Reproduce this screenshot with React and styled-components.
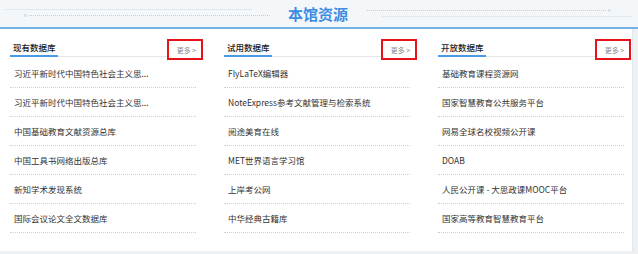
import React from "react";
import styled, { createGlobalStyle } from "styled-components";

const Global = createGlobalStyle`
  html, body { margin: 0; padding: 0; }
  body {
    background: #eef1f4;
    font-family: "Noto Sans CJK SC", "Noto Sans", sans-serif;
  }
`;

const Panel = styled.div`
  width: 632px;
  height: 251px;
  background: #fff;
  border-right: 1px solid #e2e6ea;
  display: flex;
  flex-direction: column;
`;

const Banner = styled.div`
  height: 27px;
  background: #f4f7fa;
  border-bottom: 2px solid #74b2ea;
  display: flex;
  align-items: flex-start;
  width: 638px;
  box-sizing: content-box;
`;

const Deco = styled.div`
  display: flex;
  flex-direction: column;
  gap: 4px;
  padding-top: 9px;
  width: ${(p) => p.$w || "auto"};
  flex: ${(p) => (p.$grow ? 1 : "none")};
`;

const SolidLine = styled.div`
  height: 0;
  border-top: 1px solid #e1e7ee;
  margin-left: ${(p) => p.$ml || 0}px;
  margin-right: ${(p) => p.$mr || 0}px;
`;

const DotLine = styled.div`
  display: flex;
  align-items: center;
  flex-direction: ${(p) => (p.$reverse ? "row-reverse" : "row")};
  margin-left: ${(p) => p.$ml || 0}px;
  margin-right: ${(p) => p.$mr || 0}px;
  gap: 2px;
  &::before {
    content: "";
    width: 3px;
    height: 3px;
    background: #dde4ec;
    flex: none;
  }
  &::after {
    content: "";
    flex: 1;
    border-top: 1px dotted #c3ced9;
  }
`;

const Title = styled.h1`
  margin: 0 19px 0 18px;
  font-size: 15px;
  line-height: 27px;
  font-weight: 700;
  color: #3b8de1;
  letter-spacing: 0;
  white-space: nowrap;
`;

const Columns = styled.div`
  display: grid;
  grid-template-columns: repeat(3, 186px);
  column-gap: 28px;
  padding: 10px 0 0 10px;
`;

const Column = styled.section`
  display: flex;
  flex-direction: column;
`;

const HeadRow = styled.div`
  display: flex;
  align-items: flex-start;
`;

const HeadTitle = styled.div`
  flex: 1;
  height: 17px;
  border-bottom: 1px solid #e3e6ea;
  display: flex;
`;

const HeadText = styled.span`
  padding: 0 2px 0 3px;
  font-size: 8.5px;
  line-height: 16px;
  font-weight: 500;
  color: #222;
  border-bottom: 2px solid #4a9be6;
  margin-bottom: -1px;
`;

const More = styled.a`
  width: 36px;
  height: 21px;
  box-sizing: border-box;
  border: 2px solid #e8121b;
  margin-right: -7px;
  margin-bottom: -2px;
  display: flex;
  align-items: center;
  justify-content: center;
  font-size: 7px;
  color: #8a8a8a;
  text-decoration: none;
  padding-left: 3px;
`;

const List = styled.ul`
  list-style: none;
  margin: 1px 0 0;
  padding: 0;
`;

const Item = styled.li`
  height: 29px;
  box-sizing: border-box;
  border-bottom: 1px dotted #cfcfcf;
  padding-left: 4px;
  display: flex;
  align-items: center;
  font-size: 8.5px;
  color: #333;
  white-space: nowrap;
  overflow: hidden;
`;

const data = [
  {
    title: "现有数据库",
    items: [
      "习近平新时代中国特色社会主义思...",
      "习近平新时代中国特色社会主义思...",
      "中国基础教育文献资源总库",
      "中国工具书网络出版总库",
      "新知学术发现系统",
      "国际会议论文全文数据库",
    ],
  },
  {
    title: "试用数据库",
    items: [
      "FlyLaTeX编辑器",
      "NoteExpress参考文献管理与检索系统",
      "阅途美育在线",
      "MET世界语言学习馆",
      "上岸考公网",
      "中华经典古籍库",
    ],
  },
  {
    title: "开放数据库",
    items: [
      "基础教育课程资源网",
      "国家智慧教育公共服务平台",
      "网易全球名校视频公开课",
      "DOAB",
      "人民公开课 - 大思政课MOOC平台",
      "国家高等教育智慧教育平台",
    ],
  },
];

export default function App() {
  return (
    <>
      <Global />
      <Panel>
        <Banner>
          <Deco $w="270px">
            <SolidLine $ml={5} $mr={18} />
            <DotLine $ml={24} />
          </Deco>
          <Title>本馆资源</Title>
          <Deco $grow>
            <DotLine $reverse $mr={27} />
            <SolidLine $ml={15} $mr={6} />
          </Deco>
        </Banner>
        <Columns>
          {data.map((col) => (
            <Column key={col.title}>
              <HeadRow>
                <HeadTitle>
                  <HeadText>{col.title}</HeadText>
                </HeadTitle>
                <More href="#">更多 &gt;</More>
              </HeadRow>
              <List>
                {col.items.map((it, i) => (
                  <Item key={i}>{it}</Item>
                ))}
              </List>
            </Column>
          ))}
        </Columns>
      </Panel>
    </>
  );
}
